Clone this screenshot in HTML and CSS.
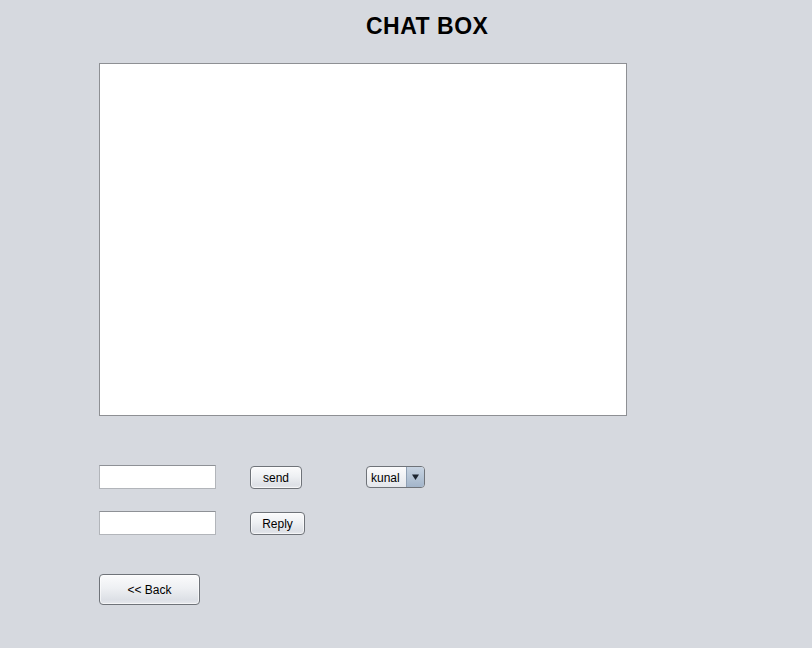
FILE: index.html
```html
<!DOCTYPE html>
<html>
<head>
<meta charset="utf-8">
<link rel="stylesheet" href="styles.css">
</head>
<body>
<div class="title">CHAT BOX</div>
<div class="main">
  <div class="chat-area"></div>
  <div class="row row-first">
    <div class="field"></div>
    <button class="btn btn-send">send</button>
    <div class="combo">
      <span class="combo-value">kunal</span>
      <span class="combo-arrow"><svg width="7" height="6" viewBox="0 0 7 6"><path d="M0 0.5 H7 L3.5 6 Z" fill="#1d2530"/></svg></span>
    </div>
  </div>
  <div class="row row-second">
    <div class="field"></div>
    <button class="btn btn-reply">Reply</button>
  </div>
  <div class="row row-back">
    <button class="btn btn-back">&lt;&lt; Back</button>
  </div>
</div>
</body>
</html>
```
FILE: styles.css
```css
html, body {
  margin: 0;
  padding: 0;
}
body {
  background: #d6d9df;
  width: 812px;
  height: 648px;
  overflow: hidden;
  font-family: "Liberation Sans", Arial, sans-serif;
  color: #000;
}
.title {
  box-sizing: border-box;
  height: 63px;
  padding-top: 13px;
  padding-left: 366px;
  font-size: 23px;
  font-weight: bold;
  line-height: 26px;
  letter-spacing: 0.5px;
}
.main {
  padding-left: 99px;
  display: flex;
  flex-direction: column;
}
.chat-area {
  box-sizing: border-box;
  width: 528px;
  height: 353px;
  background: #fff;
  border: 1px solid #8e9094;
}
.row {
  display: flex;
  align-items: flex-start;
}
.row-first {
  margin-top: 49px;
}
.row-second {
  margin-top: 22px;
}
.row-back {
  margin-top: 39px;
}
.field {
  box-sizing: border-box;
  width: 117px;
  height: 24px;
  background: #fff;
  border: 1px solid #b2b5ba;
  border-top-color: #8e9196;
}
.btn {
  box-sizing: border-box;
  margin: 1px 0 0 0;
  padding: 0;
  font-family: "Liberation Sans", Arial, sans-serif;
  font-size: 12px;
  color: #000;
  border: 1px solid #6f7379;
  border-radius: 4px;
  background: linear-gradient(#fbfbfc 0%, #eef0f3 45%, #dde0e6 85%, #e6e8ec 100%);
  box-shadow: inset 0 0 0 1px rgba(255,255,255,0.6);
}
.btn-send {
  width: 52px;
  height: 23px;
  margin-left: 34px;
}
.btn-reply {
  width: 55px;
  height: 23px;
  margin-left: 34px;
}
.btn-back {
  width: 101px;
  height: 31px;
  margin-top: 0;
}
.combo {
  box-sizing: border-box;
  margin: 1px 0 0 64px;
  width: 59px;
  height: 22px;
  display: flex;
  border: 1px solid #6f7379;
  border-radius: 4px;
  overflow: hidden;
  background: linear-gradient(#fbfbfc, #e4e7ec);
  font-size: 12px;
}
.combo-value {
  flex: 1;
  padding-left: 4px;
  line-height: 22px;
}
.combo-arrow {
  width: 17px;
  border-left: 1px solid #8fa0b4;
  background: linear-gradient(#c8d4e2, #a3b5ca);
  display: flex;
  align-items: center;
  justify-content: center;
}
```
